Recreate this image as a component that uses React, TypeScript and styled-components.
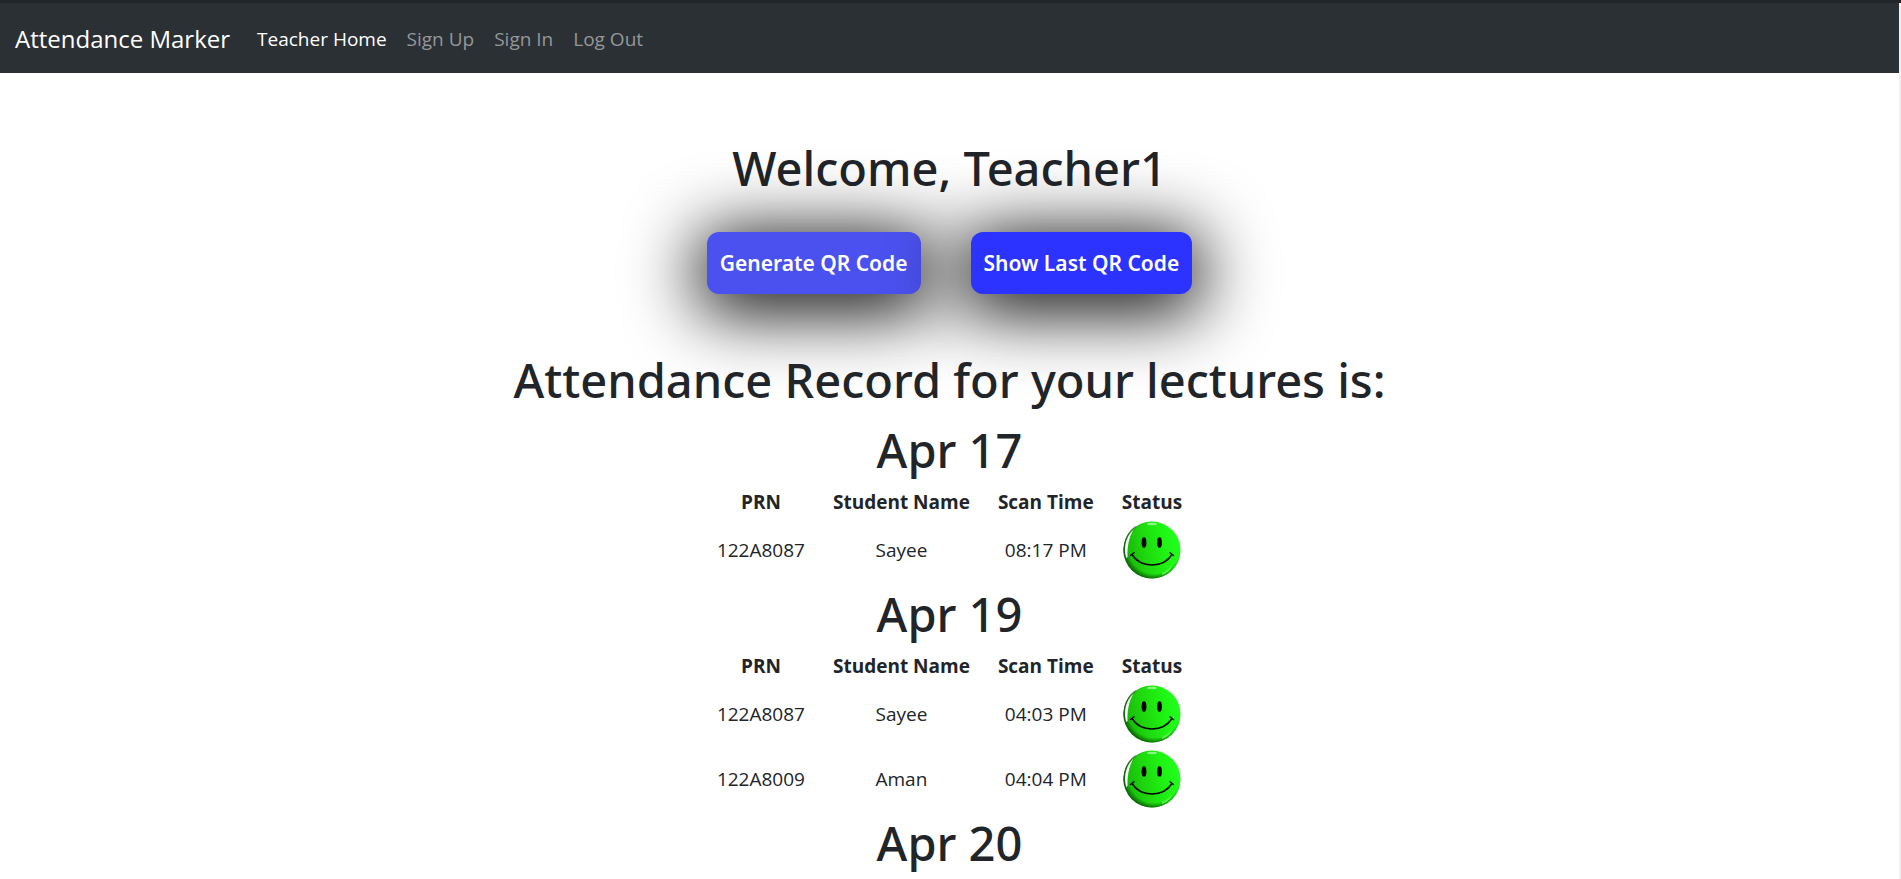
import React, { useId } from 'react';
import styled, { createGlobalStyle } from 'styled-components';

const GlobalStyle = createGlobalStyle`
  *, *::before, *::after { box-sizing: border-box; }
  html { background: #fff; }
  body {
    margin: 0;
    color: #212529;
    font-family: "Open Sans", "Noto Sans", sans-serif;
    font-size: 19px;
    line-height: 30px;
    overflow: hidden;
  }
`;

const Page = styled.div`
  height: 100vh;
  overflow: hidden;
  border-top: 3px solid #212529;
`;

const Shell = styled.div`
  min-height: 100%;
  border-right: 2px solid #f0f0f0;
`;

const Navbar = styled.nav`
  display: flex;
  align-items: center;
  height: 70px;
  padding: 2px 15px 0;
  background: #2b3035;
`;

const Brand = styled.a`
  margin-right: 17px;
  color: #fff;
  font-size: 24px;
  text-decoration: none;
`;

const NavList = styled.ul`
  display: flex;
  margin: 0;
  padding: 0;
  list-style: none;
`;

const NavLink = styled.a<{ $active?: boolean }>`
  display: block;
  padding: 10px;
  color: ${({ $active }) => ($active ? '#fff' : '#959799')};
  text-decoration: none;
`;

const Main = styled.main`
  display: flex;
  flex-direction: column;
  align-items: center;
  padding-top: 63px;
`;

const Heading = styled.h1`
  margin: 0 0 6px;
  font-family: "Noto Sans", "Open Sans", sans-serif;
  font-size: 47px;
  font-weight: 500;
  line-height: 64px;
  text-align: center;
`;

const Actions = styled.div`
  display: flex;
  gap: 50px;
  margin: 26px 0 54px;
`;

const ActionButton = styled.button<{ $hovered?: boolean }>`
  height: 62px;
  padding: 0 13px;
  border: 0;
  border-radius: 12px;
  background: ${({ $hovered }) => ($hovered ? '#4b51ef' : '#2d33ff')};
  color: #fff;
  font-family: "Noto Sans", "Open Sans", sans-serif;
  font-size: 21px;
  font-weight: 600;
  box-shadow: 0 10px 70px 9px rgba(0, 0, 0, 0.95);
`;

const Records = styled.table`
  border-collapse: collapse;
  text-align: center;

  th {
    padding: 0 14px;
    font-weight: 700;
    line-height: 29px;
  }

  td {
    height: 65px;
    padding: 0 14px;
  }
`;

const Face = styled.svg`
  display: block;
  width: 60px;
  height: 60px;
  margin: auto;
`;

function Smiley() {
  const id = useId();
  const body = `${id}-body`;
  const shade = `${id}-shade`;
  return (
    <Face viewBox="0 0 60 60" role="img" aria-label="Present">
      <defs>
        <linearGradient id={body} x1="0" y1="0.6" x2="1" y2="0.4">
          <stop offset="0" stopColor="#14b408" />
          <stop offset="0.35" stopColor="#1fd60e" />
          <stop offset="0.7" stopColor="#1ef312" />
          <stop offset="1" stopColor="#22ff20" />
        </linearGradient>
        <radialGradient id={shade} cx="0.54" cy="0.46" r="0.54">
          <stop offset="0.84" stopColor="#0a6a06" stopOpacity="0" />
          <stop offset="1" stopColor="#0a5a06" stopOpacity="0.85" />
        </radialGradient>
      </defs>
      <circle cx="30" cy="30" r="28.5" fill={`url(#${body})`} />
      <circle cx="30" cy="30" r="28.5" fill={`url(#${shade})`} />
      <path d="M4.2 38C1.5 28 3.5 17 11.5 9.5C7 17 5 27 5.6 37Z" fill="#fff" />
      <path d="M2.4 36C0.5 25 4 13 13.5 6.5" fill="none" stroke="#2b4a2b" strokeWidth="0.8" />
      <ellipse cx="30" cy="4" rx="5" ry="1.2" fill="#c9ffc4" opacity="0.6" />
      <path d="M40 53C45 51 48 48 50 45C49 50 45 53.5 40 55Z" fill="#7dff70" opacity="0.6" />
      <ellipse cx="22" cy="22.5" rx="2.4" ry="5.3" fill="#000" />
      <ellipse cx="37.5" cy="22.5" rx="2.4" ry="5.3" fill="#000" />
      <path
        d="M10 34.5C19 48.5 41 48.5 50 34.5M8.5 35.5L12 32.8M48 32.8L51.5 35.5"
        fill="none"
        stroke="#000"
        strokeWidth="1.4"
        strokeLinecap="round"
      />
    </Face>
  );
}

type Row = { prn: string; name: string; time: string };

const days: { date: string; rows: Row[] }[] = [
  { date: 'Apr 17', rows: [{ prn: '122A8087', name: 'Sayee', time: '08:17 PM' }] },
  {
    date: 'Apr 19',
    rows: [
      { prn: '122A8087', name: 'Sayee', time: '04:03 PM' },
      { prn: '122A8009', name: 'Aman', time: '04:04 PM' },
    ],
  },
  { date: 'Apr 20', rows: [] },
];

export default function App() {
  return (
    <Page>
      <GlobalStyle />
      <Shell>
        <Navbar>
          <Brand href="#">Attendance Marker</Brand>
          <NavList>
            <li><NavLink href="#" $active>Teacher Home</NavLink></li>
            <li><NavLink href="#">Sign Up</NavLink></li>
            <li><NavLink href="#">Sign In</NavLink></li>
            <li><NavLink href="#">Log Out</NavLink></li>
          </NavList>
        </Navbar>
        <Main>
          <Heading>Welcome, Teacher1</Heading>
          <Actions>
            <ActionButton type="button" $hovered>Generate QR Code</ActionButton>
            <ActionButton type="button">Show Last QR Code</ActionButton>
          </Actions>
          <Heading>Attendance Record for your lectures is:</Heading>
          {days.map((day) => (
            <React.Fragment key={day.date}>
              <Heading>{day.date}</Heading>
              {day.rows.length > 0 && (
                <Records>
                  <thead>
                    <tr><th>PRN</th><th>Student Name</th><th>Scan Time</th><th>Status</th></tr>
                  </thead>
                  <tbody>
                    {day.rows.map((r) => (
                      <tr key={r.prn}>
                        <td>{r.prn}</td><td>{r.name}</td><td>{r.time}</td><td><Smiley /></td>
                      </tr>
                    ))}
                  </tbody>
                </Records>
              )}
            </React.Fragment>
          ))}
        </Main>
      </Shell>
    </Page>
  );
}
